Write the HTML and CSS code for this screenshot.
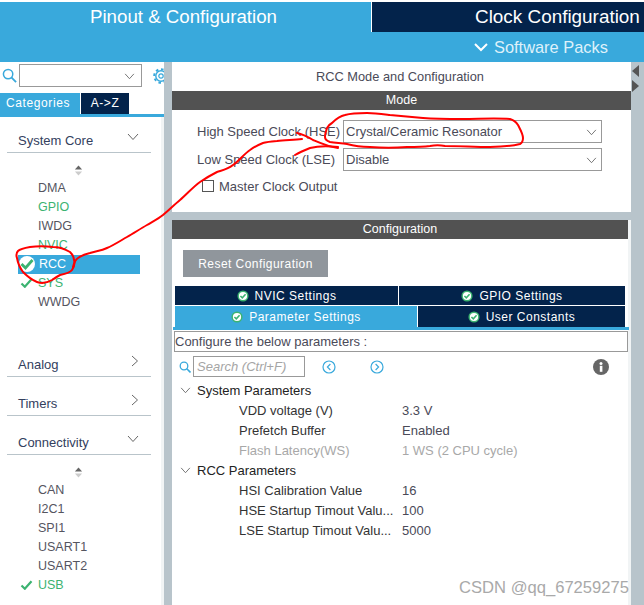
FILE: index.html
```html
<!DOCTYPE html>
<html lang="en">
<head>
  <meta charset="UTF-8" />
  <title>RCC Mode and Configuration</title>
  <link rel="stylesheet" href="styles.css">
</head>
<body>
  <svg class="defs" width="0" height="0">
    <symbol id="tick" viewBox="0 0 14 12">
      <path d="M1 6.5 L5 10.5 L13 1.5" fill="none" stroke="#3cb371" stroke-width="2.6" />
    </symbol>
    <symbol id="badge" viewBox="0 0 14 14">
      <circle cx="7" cy="7" r="6.5" fill="#3cb371" />
      <circle cx="7" cy="7" r="4.8" fill="#fff" />
      <path d="M4 7 L6.2 9.2 L10 5" fill="none" stroke="#3cb371" stroke-width="1.8" />
    </symbol>
    <symbol id="badge-sel" viewBox="0 0 16 16">
      <circle cx="8" cy="8" r="8" fill="#fff" />
      <path d="M2.5 8 L6.5 12 L13.5 4" fill="none" stroke="#3cb371" stroke-width="2.8" />
    </symbol>
    <symbol id="down" viewBox="0 0 12 8">
      <path d="M1 1 L6 6.5 L11 1" fill="none" stroke="currentColor" stroke-width="1" />
    </symbol>
    <symbol id="right" viewBox="0 0 8 12">
      <path d="M1 1 L6.5 6 L1 11" fill="none" stroke="currentColor" stroke-width="1" />
    </symbol>
    <symbol id="sort" viewBox="0 0 10 11">
      <path d="M5 0 L9 4.5 H1 Z" fill="#666" />
      <path d="M1 6.5 H9 L5 11 Z" fill="#ccc" />
    </symbol>
  </svg>

  <div class="app">
    <header class="top">
      <div class="top-tabs">
        <div class="tab-pinout">Pinout &amp; Configuration</div>
        <div class="tab-clock">Clock Configuration</div>
      </div>
      <div class="packs">
        <svg class="packs-arrow" viewBox="0 0 14 9"><path d="M1 1 L7 7 L13 1" fill="none" stroke="#fff" stroke-width="2" /></svg>
        Software Packs
      </div>
    </header>

    <main class="main">
      <aside class="side">
        <div class="finder">
          <svg class="finder-icon" viewBox="0 0 16 16"><circle cx="6.5" cy="6.5" r="5" fill="none" stroke="#39a9dc" stroke-width="1.6" /><path d="M10 10 L15 15" stroke="#39a9dc" stroke-width="2" /></svg>
          <div class="finder-box"><svg class="chev"><use href="#down" /></svg></div>
          <svg class="gear" viewBox="0 0 16 16">
            <circle cx="8" cy="8" r="5.2" fill="none" stroke="#39a9dc" stroke-width="1.4" />
            <circle cx="8" cy="8" r="2.2" fill="none" stroke="#39a9dc" stroke-width="1.2" />
            <circle cx="8" cy="8" r="6.8" fill="none" stroke="#39a9dc" stroke-width="2" stroke-dasharray="2.6 2.7" />
          </svg>
        </div>
        <div class="side-tabs">
          <div class="side-tab side-tab-on">Categories</div>
          <div class="side-tab">A-&gt;Z</div>
        </div>
        <div class="side-body">
          <div class="cat first"><span>System Core</span><svg class="chev-cat"><use href="#down" /></svg></div>
          <svg class="sort"><use href="#sort" /></svg>
          <ul class="items">
            <li>DMA</li>
            <li class="ok">GPIO</li>
            <li>IWDG</li>
            <li class="ok">NVIC</li>
            <li class="sel"><svg class="badge-big"><use href="#badge-sel" /></svg>RCC</li>
            <li class="ok"><svg class="tick"><use href="#tick" /></svg>SYS</li>
            <li>WWDG</li>
          </ul>
          <div class="cat gap-big"><span>Analog</span><svg class="chev-side"><use href="#right" /></svg></div>
          <div class="cat"><span>Timers</span><svg class="chev-side"><use href="#right" /></svg></div>
          <div class="cat"><span>Connectivity</span><svg class="chev-cat"><use href="#down" /></svg></div>
          <svg class="sort"><use href="#sort" /></svg>
          <ul class="items">
            <li>CAN</li>
            <li>I2C1</li>
            <li>SPI1</li>
            <li>USART1</li>
            <li>USART2</li>
            <li class="ok"><svg class="tick"><use href="#tick" /></svg>USB</li>
          </ul>
        </div>
      </aside>

      <div class="split"></div>

      <section class="panel">
        <div class="mode">
          <div class="panel-title">RCC Mode and Configuration</div>
          <div class="bar">Mode</div>
          <div class="mode-form">
            <div class="field">
              <label class="field-label">High Speed Clock (HSE)</label>
              <div class="select">Crystal/Ceramic Resonator<svg class="chev"><use href="#down" /></svg></div>
            </div>
            <div class="field">
              <label class="field-label">Low Speed Clock (LSE)</label>
              <div class="select">Disable<svg class="chev"><use href="#down" /></svg></div>
            </div>
            <div class="check"><span class="check-box"></span>Master Clock Output</div>
          </div>
        </div>

        <div class="config">
          <div class="bar">Configuration</div>
          <button class="reset">Reset Configuration</button>
          <div class="tabs tabs-a">
            <div class="tab"><svg class="badge"><use href="#badge" /></svg>NVIC Settings</div>
            <div class="tab"><svg class="badge"><use href="#badge" /></svg>GPIO Settings</div>
          </div>
          <div class="tabs tabs-b">
            <div class="tab tab-on"><svg class="badge"><use href="#badge" /></svg>Parameter Settings</div>
            <div class="tab"><svg class="badge"><use href="#badge" /></svg>User Constants</div>
          </div>
          <div class="tabs-line"></div>
          <div class="hint">Configure the below parameters :</div>
          <div class="searchbar">
            <svg class="search-icon" viewBox="0 0 12 12"><circle cx="5" cy="5" r="3.8" fill="none" stroke="#39a9dc" stroke-width="1.3" /><path d="M7.8 7.8 L11.5 11.5" stroke="#39a9dc" stroke-width="1.6" /></svg>
            <div class="search-box">Search (Ctrl+F)</div>
            <svg class="nav nav-prev" viewBox="0 0 14 14"><circle cx="7" cy="7" r="6" fill="none" stroke="#39a9dc" stroke-width="1.2" /><path d="M8.4 4 L5.4 7 L8.4 10" fill="none" stroke="#39a9dc" stroke-width="1.2" /></svg>
            <svg class="nav nav-next" viewBox="0 0 14 14"><circle cx="7" cy="7" r="6" fill="none" stroke="#39a9dc" stroke-width="1.2" /><path d="M5.6 4 L8.6 7 L5.6 10" fill="none" stroke="#39a9dc" stroke-width="1.2" /></svg>
            <svg class="info" viewBox="0 0 16 16"><circle cx="8" cy="8" r="8" fill="#666" /><rect x="6.8" y="6.8" width="2.6" height="6" fill="#fff" /><circle cx="8" cy="4.4" r="1.5" fill="#fff" /></svg>
          </div>
          <div class="tree">
            <div class="group"><svg class="chev-tree"><use href="#down" /></svg>System Parameters</div>
            <div class="param"><span class="param-name">VDD voltage (V)</span><span>3.3 V</span></div>
            <div class="param"><span class="param-name">Prefetch Buffer</span><span>Enabled</span></div>
            <div class="param off"><span class="param-name">Flash Latency(WS)</span><span>1 WS (2 CPU cycle)</span></div>
            <div class="group"><svg class="chev-tree"><use href="#down" /></svg>RCC Parameters</div>
            <div class="param"><span class="param-name">HSI Calibration Value</span><span>16</span></div>
            <div class="param"><span class="param-name">HSE Startup Timout Valu...</span><span>100</span></div>
            <div class="param"><span class="param-name">LSE Startup Timout Valu...</span><span>5000</span></div>
          </div>
        </div>
      </section>

      <div class="rail">
        <span class="rail-left"></span>
        <span class="rail-right"></span>
      </div>
    </main>

    <!-- hand drawn red marks on top of the screenshot -->
    <svg class="marks" viewBox="0 0 644 605">
      <g fill="none" stroke="#f00" stroke-width="2" stroke-linecap="round" stroke-linejoin="round">
        <path d="M70 252 C65 249 60 247 53 247 C45 246 37 246 30 247 C24 248 20 249 18 251 C16 253 16 255 17 258 C18 264 20 268 23 272 C27 276 32 280 37 282 C42 284 47 283 52 280 C55 278 58 276 60 275 C65 274 70 273 72 270 C74 267 75 263 74 260 C74 257 72 254 70 252" />
        <path d="M73 267 C74 263 75 260 78 258 C82 255 86 254 90 253 C96 251 101 251 107 248 C114 245 120 241 127 237 C134 233 140 229 147 225 C152 222 158 219 163 215 C169 210 174 205 180 200 C187 194 193 187 200 182 C206 178 211 175 217 172 C223 170 228 169 233 165 C239 161 244 154 250 150 C254 147 258 145 263 143 C268 142 272 141 277 141 C285 140 294 140 302 139" />
        <path d="M297 133 C302 134 308 137 313 140 C320 143 329 147 338 148" />
        <path d="M295 155 C300 152 305 150 310 148 C318 146 328 146 338 147" />
        <path d="M332 123 C336 119 340 116 345 115 C352 113 360 113 367 113 C375 113 382 114 390 115 C401 116 412 117 423 118 C436 119 450 119 463 119 C478 119 495 118 510 119 C514 120 516 122 518 125 C520 129 523 134 523 138 C523 141 522 143 520 144 C512 146 500 147 490 147 C475 147 460 146 445 146 C440 145 435 145 430 146 C422 147 415 147 407 147 C395 148 382 148 370 147 C362 147 354 146 347 144 C341 143 335 143 330 142 C327 141 325 139 325 137 C325 134 326 131 327 128 C328 126 330 124 332 123" />
      </g>
    </svg>
    <div class="watermark">CSDN @qq_67259275</div>
  </div>
</body>
</html>
```

FILE: styles.css
```css
* {
  box-sizing: border-box;
}

body {
  margin: 0;
  background: #fff;
  font-family: "Liberation Sans", Arial, sans-serif;
  font-size: 13px;
  color: #4a4a58;
}

.defs {
  position: absolute;
}

.app {
  position: relative;
  width: 644px;
  height: 605px;
  padding-top: 2px;
  overflow: hidden;
}

/* header */
.top {
  height: 60px;
  background: #39a9dc;
  color: #fff;
}

.top-tabs {
  display: flex;
  height: 30px;
}

.tab-pinout {
  width: 371px;
  padding-left: 90px;
  font-size: 18.7px;
  line-height: 30px;
}

.tab-clock {
  flex: 1;
  padding-left: 103px;
  background: #03234b;
  border-left: 1px solid #fff;
  font-size: 18.9px;
  line-height: 30px;
  white-space: nowrap;
}

.packs {
  display: flex;
  align-items: center;
  height: 30px;
  padding-left: 474px;
  font-size: 16.4px;
  color: #dff1fa;
}

.packs-arrow {
  width: 14px;
  height: 9px;
  margin-right: 6px;
}

.main {
  display: flex;
  height: 543px;
}

/* left column */
.side {
  width: 164px;
  flex: none;
}

.finder {
  display: flex;
  align-items: center;
  height: 23px;
  margin-top: 2px;
  padding-left: 2px;
}

.finder-icon {
  width: 15px;
  height: 15px;
}

.finder-box {
  position: relative;
  width: 123px;
  height: 23px;
  margin-left: 2px;
  border: 1px solid #999;
}

.chev {
  position: absolute;
  right: 6px;
  top: 8px;
  width: 11px;
  height: 7px;
  color: #666;
}

.gear {
  flex: none;
  width: 16px;
  height: 16px;
  margin-left: 11px;
  margin-right: -12px;
}

.side-tabs {
  display: flex;
  height: 24px;
  margin-top: 6px;
  border-bottom: 3px solid #39a9dc;
  font-size: 12px;
}

.side-tab {
  width: 48px;
  margin-left: 1px;
  background: #03234b;
  color: #fff;
  text-align: center;
  letter-spacing: 0.6px;
  line-height: 21px;
}

.side-tab-on {
  width: 80px;
  margin-left: 0;
  padding-right: 4px;
  background: #39a9dc;
}

.side-body {
  height: 488px;
  padding-top: 11px;
  border-right: 3px solid #f1f4f5;
}

.cat {
  display: flex;
  align-items: center;
  justify-content: space-between;
  height: 25px;
  margin: 14px 10px 0 7px;
  padding: 0 12px 0 11px;
  border-bottom: 1px solid #b9c4ca;
  font-size: 13px;
  color: #33405e;
}

.first {
  margin-top: 0;
}

.gap-big {
  margin-top: 40px;
}

.chev-cat {
  width: 12px;
  height: 8px;
  margin-top: -6px;
  color: #666;
}

.chev-side {
  width: 8px;
  height: 12px;
  margin-top: -6px;
  color: #666;
}

.sort {
  display: block;
  width: 9px;
  height: 11px;
  margin: 12px 0 3px 74px;
}

.items {
  margin: 0;
  padding: 0;
  list-style: none;
}

.items li {
  position: relative;
  width: 140px;
  height: 19px;
  padding-left: 38px;
  font-size: 12.5px;
  line-height: 19px;
  color: #55555f;
}

.items .ok {
  color: #3cb371;
}

.items .sel {
  margin-left: 18px;
  width: 122px;
  padding-left: 21px;
  background: #39a9dc;
  color: #fff;
}

.tick {
  position: absolute;
  left: 20px;
  top: 4px;
  width: 13px;
  height: 10px;
}

.badge-big {
  position: absolute;
  left: 1px;
  top: 1px;
  width: 16px;
  height: 16px;
}

.split {
  flex: none;
  width: 8px;
  background: #b8c4cb;
}

/* right column */
.panel {
  width: 459px;
  flex: none;
}

.mode {
  height: 150px;
}

.panel-title {
  height: 29px;
  padding-right: 3px;
  font-size: 12.8px;
  text-align: center;
  line-height: 29px;
}

.bar {
  height: 19px;
  background: #525252;
  color: #fff;
  font-size: 12.5px;
  text-align: center;
  line-height: 19px;
}

.mode-form {
  padding-top: 10px;
}

.field {
  display: flex;
  align-items: center;
  height: 23px;
  margin-bottom: 5px;
}

.field-label {
  width: 171px;
  padding-left: 25px;
  white-space: nowrap;
}

.select {
  position: relative;
  width: 259px;
  height: 23px;
  padding-left: 2px;
  border: 1px solid #999;
  line-height: 21px;
}

.select .chev {
  right: 4px;
}

.check {
  display: flex;
  align-items: center;
  height: 16px;
  margin-top: 7px;
  padding-left: 30px;
}

.check-box {
  width: 12px;
  height: 12px;
  margin-right: 5px;
  border: 1px solid #555;
}

.config {
  height: 385px;
  margin-top: 8px;
  border-right: 3px solid #f1f4f5;
  box-shadow: 0 -8px 0 #b8c4cb;
}

.reset {
  display: block;
  width: 145px;
  height: 27px;
  margin: 11px 0 9px 11px;
  border: 0;
  background: #90969c;
  color: #fff;
  font: 12px "Liberation Sans", Arial, sans-serif;
  letter-spacing: 0.45px;
}

.tabs {
  display: grid;
  width: 450px;
  margin-left: 3px;
  column-gap: 1px;
  color: #fff;
  font-size: 12px;
  letter-spacing: 0.5px;
}

.tabs-a {
  grid-template-columns: 223px 226px;
  height: 19px;
  margin-bottom: 1px;
}

.tabs-b {
  grid-template-columns: 242px 207px;
  height: 21px;
}

.tab {
  display: flex;
  align-items: center;
  justify-content: center;
  background: #03234b;
}

.tab-on {
  background: #39a9dc;
}

.badge {
  width: 12px;
  height: 12px;
  margin-right: 6px;
}

.tabs-line {
  width: 456px;
  height: 3px;
  margin-left: 1px;
  background: #39a9dc;
}

.hint {
  width: 454px;
  height: 21px;
  margin: 1px 0 0 2px;
  padding-left: 0;
  border: 1px solid #999;
  line-height: 19px;
  font-size: 13px;
  white-space: nowrap;
}

.searchbar {
  display: flex;
  align-items: center;
  height: 21px;
  margin-top: 4px;
  padding-left: 7px;
}

.search-icon {
  width: 12px;
  height: 12px;
  margin-right: 2px;
}

.search-box {
  width: 112px;
  height: 21px;
  padding-left: 3px;
  border: 1px solid #999;
  color: #a5a5a5;
  font-style: italic;
  line-height: 19px;
  white-space: nowrap;
}

.nav {
  width: 14px;
  height: 14px;
}

.nav-prev {
  margin-left: 17px;
}

.nav-next {
  margin-left: 34px;
}

.info {
  width: 16px;
  height: 16px;
  margin-left: 209px;
}

.tree {
  padding-top: 3px;
}

.group {
  display: flex;
  align-items: center;
  height: 20px;
  padding-left: 8px;
  color: #222;
}

.chev-tree {
  width: 11px;
  height: 7px;
  margin-right: 6px;
  color: #666;
}

.param {
  display: flex;
  align-items: center;
  height: 20px;
  padding-left: 67px;
}

.param-name {
  width: 163px;
  color: #333;
  white-space: nowrap;
}

.off,
.off .param-name {
  color: #a8a8a8;
}

.rail {
  flex: 1;
  display: flex;
  flex-direction: column;
  background: #b8c4cb;
  padding: 3px 0 0 1px;
}

.rail-left {
  width: 0;
  height: 0;
  border: 6px solid transparent;
  border-left-width: 0;
  border-right: 7px solid #555;
}

.rail-right {
  width: 0;
  height: 0;
  margin-top: 3px;
  border: 6px solid transparent;
  border-right-width: 0;
  border-left: 7px solid #555;
}

/* overlays */
.marks {
  position: absolute;
  left: 0;
  top: 0;
  width: 644px;
  height: 605px;
}

.watermark {
  position: absolute;
  left: 459px;
  top: 578px;
  font-size: 16.6px;
  color: #a9a9a9;
  white-space: nowrap;
}
```
